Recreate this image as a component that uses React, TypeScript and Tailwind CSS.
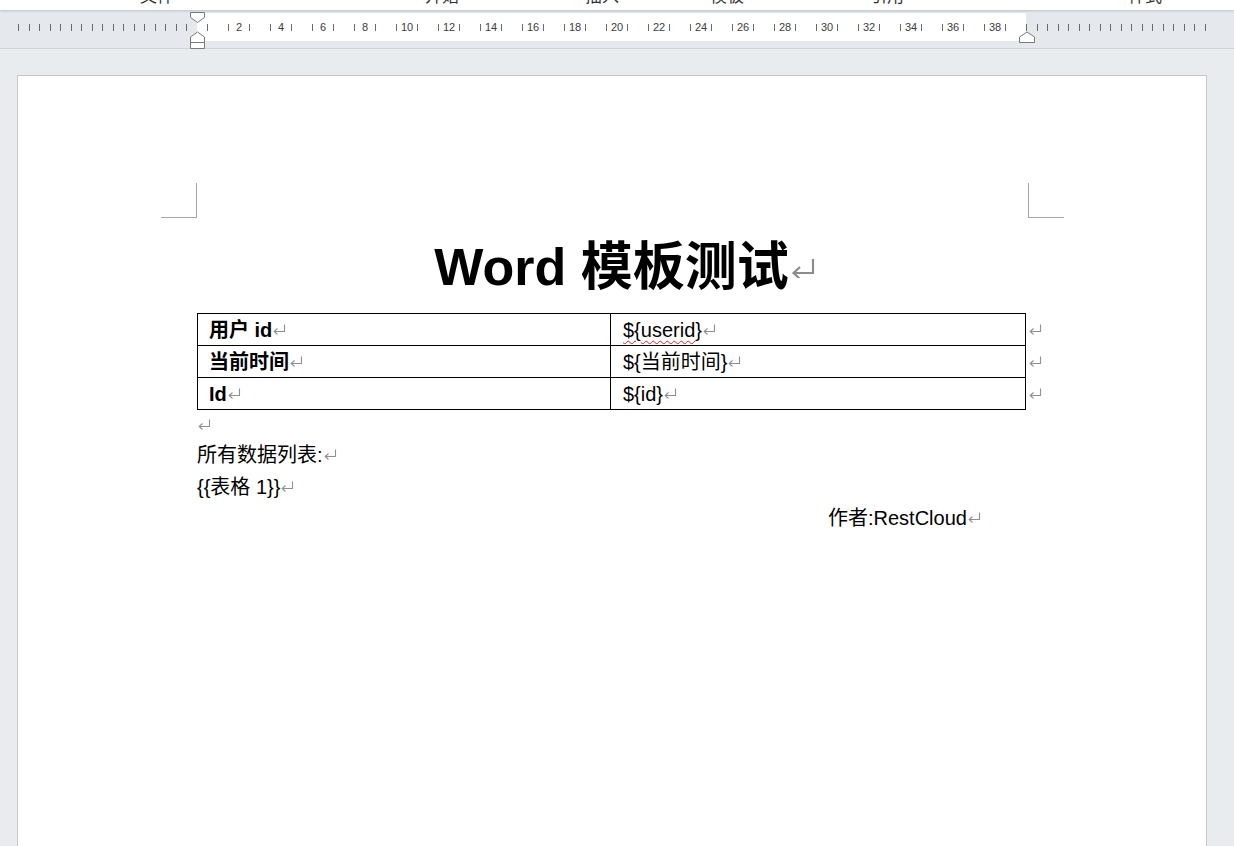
import React from 'react';

const FONT = '"Liberation Sans", "Noto Sans CJK SC", sans-serif';

// Word-style paragraph mark
function Ret({ big = false }: { big?: boolean }) {
  if (big) {
    return (
      <svg width="24" height="20" viewBox="0 0 24 20" className="inline-block -mr-[26px] ml-[2px] align-[7px]">
        <path d="M22 1 V15 H3" fill="none" stroke="#8c8c8c" strokeWidth="2.2" />
        <path d="M9 9 L2.5 15 L9 21" fill="none" stroke="#8c8c8c" strokeWidth="2.2" />
      </svg>
    );
  }
  return (
    <svg width="13" height="11" viewBox="0 0 13 11" className="inline-block ml-[1px] align-[2px]">
      <path d="M11.5 0.5 V7.5 H1.5" fill="none" stroke="#8f8f8f" strokeWidth="1.1" />
      <path d="M4.5 4.5 L1.2 7.5 L4.5 10.5" fill="none" stroke="#8f8f8f" strokeWidth="1.1" />
    </svg>
  );
}

function Tick() {
  return <div className="w-px h-[7px] bg-[#6b6b6b]" />;
}

function Ruler() {
  const mid: React.ReactNode[] = [];
  for (let i = 1; i <= 78; i++) {
    let inner: React.ReactNode = null;
    if (i % 2 === 1) inner = <Tick />;
    else if (i % 4 === 0) inner = <span className="text-[11px] leading-none text-[#3c3c3c]">{i / 2}</span>;
    mid.push(
      <div key={i} className="w-[10.5px] shrink-0 flex items-center justify-center">
        {inner}
      </div>
    );
  }
  return (
    <div className="relative h-[39px] bg-[#e5e9ed] border-b border-[#d2d5d8]" style={{ fontFamily: FONT }}>
      <div className="flex h-[28px] pt-[3px] box-content">
        <div className="w-[197px] flex items-center gap-[9.5px] pl-[18px]">
          {Array.from({ length: 17 }).map((_, k) => (
            <Tick key={k} />
          ))}
        </div>
        <div className="w-[829px] bg-white flex items-center">
          <div className="w-[5.25px] shrink-0" />
          {mid}
        </div>
        <div className="flex-1 flex items-center gap-[9.5px]">
          {Array.from({ length: 18 }).map((_, k) => (
            <Tick key={k} />
          ))}
        </div>
      </div>
      {/* indent markers */}
      <svg className="absolute left-[189px] top-[2px]" width="17" height="37" viewBox="0 0 17 37">
        <path d="M1.5 0.5 H15.5 V5.5 L8.5 10.5 L1.5 5.5 Z" fill="#fff" stroke="#7a7a7a" />
        <path d="M1.5 30.5 V25 L8.5 20 L15.5 25 V30.5 Z" fill="#fff" stroke="#7a7a7a" />
        <path d="M1.5 30.5 H15.5 V36.5 H1.5 Z" fill="#fff" stroke="#7a7a7a" />
      </svg>
      <svg className="absolute left-[1018px] top-[21px]" width="18" height="13" viewBox="0 0 18 13">
        <path d="M1.5 11.5 V6 L9 1 L16.5 6 V11.5 Z" fill="#fff" stroke="#7a7a7a" />
      </svg>
    </div>
  );
}

function TopBar() {
  const items = [
    { t: '文件', w: 'w-[285px]' },
    { t: '开始', w: 'w-[160px]' },
    { t: '插入', w: 'w-[125px]' },
    { t: '模板', w: 'w-[160px]' },
    { t: '引用', w: 'w-[258px]' },
    { t: '样式', w: 'w-[40px]' },
  ];
  return (
    <div className="h-[10px] bg-white overflow-hidden shadow-[0_1px_3px_rgba(0,0,0,0.18)] relative z-10">
      <div className="flex pl-[140px] h-[20px] -translate-y-[13px]" style={{ fontFamily: FONT }}>
        {items.map((it, k) => (
          <span key={k} className={`shrink-0 text-[17px] leading-[20px] text-[#333] ${it.w}`}>
            {it.t}
          </span>
        ))}
      </div>
    </div>
  );
}

const rows = [
  { k: '用户 id', v: <><span className="underline decoration-wavy decoration-[#e02020] decoration-1 underline-offset-[3px]">{'${'}<span>userid</span></span>{'}'}</> },
  { k: '当前时间', v: <>{'${当前时间}'}</> },
  { k: 'Id', v: <>{'${id}'}</> },
];

export default function App() {
  return (
    <div className="w-[1234px] h-[846px] overflow-hidden bg-[#e8ecef]" style={{ fontFamily: FONT }}>
      <TopBar />
      <Ruler />
      <div className="pl-[17px] pt-[26px]">
        <div className="w-[1190px] h-[800px] bg-white border border-[#c6c6c6] pt-[107px]">
          {/* margin corner marks */}
          <div className="flex h-[35px]">
            <div className="ml-[143px] w-[36px] h-[35px] border-r border-b border-[#a5a5a5]" />
            <div className="ml-[831px] w-[36px] h-[35px] border-l border-b border-[#a5a5a5]" />
          </div>

          <div className="pl-[179px]">
            <h1 className="w-[829px] mt-[19px] text-center text-[52px] font-bold leading-[60px] text-black">
              Word 模板测试<Ret big />
            </h1>

            <div className="mt-[16px] flex text-[20px] text-black">
              <div className="w-[829px] shrink-0 border border-black">
                {rows.map((r, k) => (
                  <div key={k} className={`flex ${k > 0 ? 'h-[32px] border-t border-black' : 'h-[31px]'}`}>
                    <div className="w-[413px] border-r border-black pl-[11px] font-bold flex items-center leading-none">
                      {r.k}
                      <Ret />
                    </div>
                    <div className="flex-1 pl-[12px] flex items-center leading-none">
                      {r.v}
                      <Ret />
                    </div>
                  </div>
                ))}
              </div>
              <div className="flex flex-col">
                {rows.map((_, k) => (
                  <div key={k} className="h-[32px] flex items-center pl-[2px]">
                    <Ret />
                  </div>
                ))}
              </div>
            </div>

            <div className="text-[20px] text-black leading-[32px]">
              <div className="h-[29px] flex items-center">
                <Ret />
              </div>
              <p>
                所有数据列表:<Ret />
              </p>
              <p>
                {'{{表格 1}}'}<Ret />
              </p>
              <p className="pl-[631px] -mt-[1px]">
                作者:RestCloud<Ret />
              </p>
            </div>
          </div>
        </div>
      </div>
    </div>
  );
}
